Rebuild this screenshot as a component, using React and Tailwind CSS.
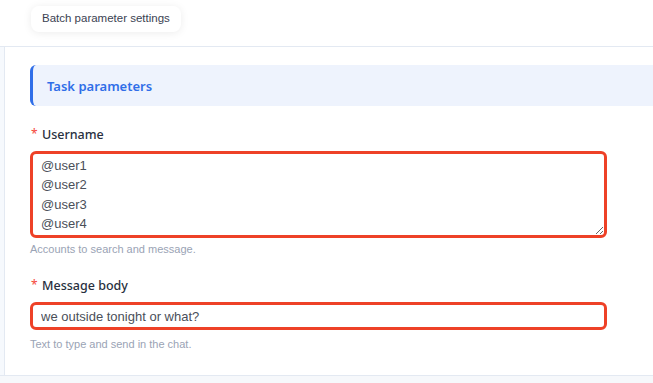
import React from 'react';

const Field = ({ label, hint, hintGap, children }) => (
  <div className="flex flex-col">
    <div className="flex items-center h-[20px] text-[12.5px] font-medium text-[#283040]">
      <span className="text-[#f5463a] text-[12px] font-normal w-[12px] pl-[1px] -mt-[3px]">*</span>
      <span>{label}</span>
    </div>
    <div className="mt-[6px]">{children}</div>
    <div
      className={`${hintGap} text-[11px] text-[#9aa3b5] leading-[16px]`}
      style={{ fontFamily: '"Liberation Sans", Arial, sans-serif' }}
    >
      {hint}
    </div>
  </div>
);

const App = () => {
  return (
    <div
      className="w-[653px] h-[383px] bg-white flex flex-col overflow-hidden"
      style={{ fontFamily: '"Noto Sans", "Open Sans", sans-serif' }}
    >
      {/* Tabs */}
      <div className="h-[47px] border-b border-[#e3e9f2] pl-[31px] pt-[4px] shrink-0">
        <div
          className="inline-flex items-center h-[26px] px-[11px] rounded-[8px] bg-white shadow-[0_1px_8px_rgba(0,0,0,0.08)] text-[11.5px] text-[#3b4252]"
          style={{ fontFamily: '"Liberation Sans", Arial, sans-serif' }}
        >
          Batch parameter settings
        </div>
      </div>

      {/* Body */}
      <div className="flex flex-1 min-h-0">
        <div className="w-[5px] bg-[#f6f9fd] border-r border-[#e3e9f2] shrink-0" />
        <div className="flex-1 pl-[25px] pt-[18px] flex flex-col min-w-0">
          <div className="h-[41px] flex items-center rounded-l-[6px] border-l-[3px] border-[#2f6ee8] bg-[#eef3fd] pl-[14px] pt-[2px] -mr-[20px]">
            <span className="text-[13px] font-semibold text-[#2f6ee8]">Task parameters</span>
          </div>

          <div className="mt-[19px] w-[577px]">
            <Field label="Username" hint="Accounts to search and message." hintGap="mt-[3px]">
              <textarea
                className="block w-full h-[87px] resize-y rounded-[6px] border-[3px] border-[#ee4127] pl-[8px] pt-[2px] text-[13px] leading-[19.3px] text-[#4a4f59] outline-none"
                style={{ fontFamily: '"Liberation Sans", Arial, sans-serif' }}
                defaultValue={'@user1\n@user2\n@user3\n@user4'}
              />
            </Field>
          </div>

          <div className="mt-[19px] w-[577px]">
            <Field label="Message body" hint="Text to type and send in the chat." hintGap="mt-[6px]">
              <input
                className="block w-full h-[28px] rounded-[6px] border-[3px] border-[#ee4127] pl-[8px] text-[13px] text-[#4a4f59] outline-none"
                style={{ fontFamily: '"Liberation Sans", Arial, sans-serif' }}
                defaultValue="we outside tonight or what?"
              />
            </Field>
          </div>
        </div>
      </div>

      <div className="h-[8px] bg-[#f6f8fb] border-t border-[#e3e9f2] shrink-0" />
    </div>
  );
};

export default App;
